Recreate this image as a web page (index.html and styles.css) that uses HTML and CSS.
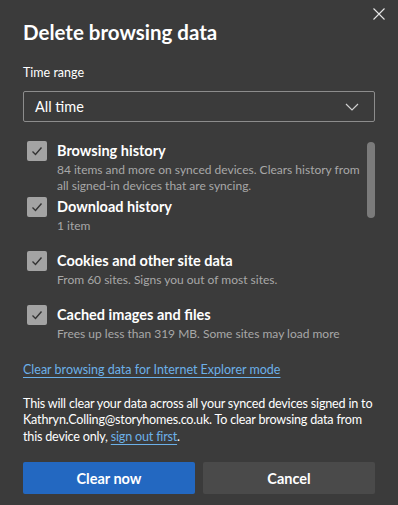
FILE: index.html
```html
<!DOCTYPE html>
<html lang="en">
  <head>
    <meta charset="UTF-8" />
    <title>Delete browsing data</title>
    <link rel="stylesheet" href="styles.css">
  </head>
  <body>
    <div class="dialog">
      <button class="close" aria-label="Close">
        <svg width="12" height="12" viewBox="0 0 12 12">
          <path d="M0.5 0.5 L11.5 11.5 M11.5 0.5 L0.5 11.5" stroke="#e6e6e6" stroke-width="1.1" fill="none" />
        </svg>
      </button>
      <h1 class="title">Delete browsing data</h1>

      <div class="label">Time range</div>
      <div class="select">
        <span>All time</span>
        <svg width="14" height="8" viewBox="0 0 14 8">
          <path d="M1 1 L7 7 L13 1" stroke="#d0d0d0" stroke-width="1.2" fill="none" />
        </svg>
      </div>

      <div class="list">
        <div class="item">
          <div class="check"><svg width="14" height="14" viewBox="0 0 14 14"><path d="M2.5 7.5 L5.5 10.5 L11.5 3.5" stroke="#333" stroke-width="1.4" fill="none" /></svg></div>
          <div class="text">
            <div class="name">Browsing history</div>
            <div class="desc">84 items and more on synced devices. Clears history from all signed-in devices that are syncing.</div>
          </div>
        </div>
        <div class="item">
          <div class="check"><svg width="14" height="14" viewBox="0 0 14 14"><path d="M2.5 7.5 L5.5 10.5 L11.5 3.5" stroke="#333" stroke-width="1.4" fill="none" /></svg></div>
          <div class="text">
            <div class="name">Download history</div>
            <div class="desc">1 item</div>
          </div>
        </div>
        <div class="item">
          <div class="check"><svg width="14" height="14" viewBox="0 0 14 14"><path d="M2.5 7.5 L5.5 10.5 L11.5 3.5" stroke="#333" stroke-width="1.4" fill="none" /></svg></div>
          <div class="text">
            <div class="name">Cookies and other site data</div>
            <div class="desc">From 60 sites. Signs you out of most sites.</div>
          </div>
        </div>
        <div class="item">
          <div class="check"><svg width="14" height="14" viewBox="0 0 14 14"><path d="M2.5 7.5 L5.5 10.5 L11.5 3.5" stroke="#333" stroke-width="1.4" fill="none" /></svg></div>
          <div class="text">
            <div class="name">Cached images and files</div>
            <div class="desc">Frees up less than 319 MB. Some sites may load more slowly on your next visit.</div>
          </div>
        </div>
        <div class="thumb"></div>
      </div>

      <a class="ie-link" href="#">Clear browsing data for Internet Explorer mode</a>

      <p class="note">This will clear your data across all your synced devices signed in to<br>Kathryn.Colling@storyhomes.co.uk. To clear browsing data from<br>this device only, <a href="#">sign out first</a>.</p>

      <div class="buttons">
        <button class="btn primary">Clear now</button>
        <button class="btn">Cancel</button>
      </div>
    </div>
  </body>
</html>
```

FILE: styles.css
```css
* {
  margin: 0;
  padding: 0;
  box-sizing: border-box;
}
body {
  width: 398px;
  height: 505px;
  background-color: #3b3b3b;
  font-family: Lato, "Open Sans", sans-serif;
  color: #ffffff;
  overflow: hidden;
}
.dialog {
  position: relative;
  padding: 18px 23px 0 23px;
}
.close {
  position: absolute;
  top: 8px;
  right: 13px;
  width: 12px;
  height: 12px;
  border: none;
  background: none;
  display: flex;
}
.title {
  font-size: 20.5px;
  font-weight: 700;
  line-height: 28px;
}
.label {
  margin-top: 19px;
  font-size: 12.5px;
  line-height: 16px;
}
.select {
  margin-top: 10px;
  height: 31px;
  border: 1px solid #8c8c8c;
  border-radius: 2px;
  display: flex;
  align-items: center;
  justify-content: space-between;
  padding: 0 15px 0 11px;
  font-size: 14.5px;
}

/* checkbox list */
.list {
  position: relative;
  margin-top: 18px;
  height: 203px;
  overflow: hidden;
  padding-left: 4px;
  padding-right: 6px;
}
.item {
  display: flex;
  gap: 10px;
  margin-bottom: 16px;
}
.item:first-child {
  margin-bottom: 2px;
}
.check {
  flex: none;
  width: 20px;
  height: 20px;
  margin-top: 1px;
  background-color: #a3a3a3;
  border-radius: 2px;
  display: flex;
  align-items: center;
  justify-content: center;
}
.name {
  font-size: 14.5px;
  font-weight: 700;
  line-height: 21px;
}
.desc {
  margin-top: 1px;
  font-size: 12px;
  line-height: 16px;
  color: #a8a8a8;
}
.thumb {
  position: absolute;
  top: 2px;
  right: 0;
  width: 8px;
  height: 76px;
  border-radius: 4px;
  background-color: #7b7b7b;
}

.ie-link {
  display: inline-block;
  margin-top: 18px;
  font-size: 12.5px;
  line-height: 18px;
  color: #6cb0e8;
  text-decoration: underline;
  text-underline-offset: 3px;
}
.note {
  margin-top: 16.5px;
  font-size: 12.6px;
  line-height: 16.5px;
  letter-spacing: -0.2px;
  white-space: nowrap;
}
.note a {
  color: #6cb0e8;
  text-decoration: underline;
  text-underline-offset: 3px;
}
.buttons {
  margin-top: 17px;
  display: flex;
  gap: 8px;
}
.btn {
  flex: 1;
  height: 32px;
  border: none;
  border-radius: 2px;
  background-color: #4a4a4a;
  color: #ffffff;
  font-family: inherit;
  font-size: 14.5px;
  font-weight: 700;
}
.btn.primary {
  background-color: #2368c1;
}
```
